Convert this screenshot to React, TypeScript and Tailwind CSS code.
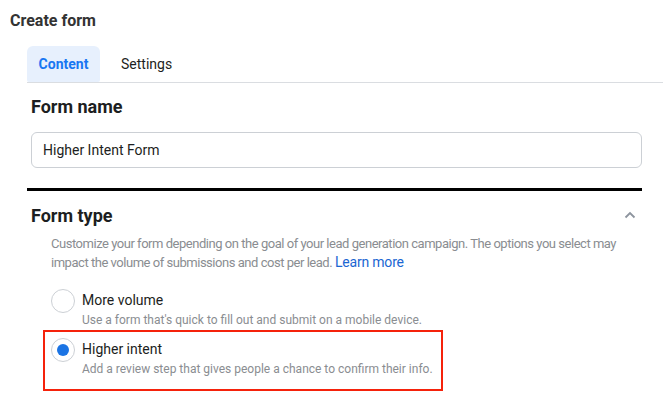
import React from "react";

export default function App() {
  return (
    <div className="w-[663px] h-[402px] bg-white overflow-hidden font-['Roboto',sans-serif] text-[#1c1e21]">
      <div className="pl-[10px] pt-[10px] text-[16px] leading-[22px] font-bold text-[#333]">Create form</div>
      <div className="ml-[27px] mt-[14px] flex items-stretch border-b border-[#dadde1] h-[37px]">
        <div className="w-[73px] h-[36px] rounded-t-[6px] rounded-b-[2px] bg-[#e7f0fd] flex items-center justify-center text-[14px] font-bold text-[#1877f2]">
          Content
        </div>
        <div className="ml-[21px] h-[36px] flex items-center text-[14px] text-[#1c1e21]">Settings</div>
      </div>
      <div className="ml-[31px] mt-[12px] text-[18px] leading-[24px] font-bold text-[#1c1e21]">Form name</div>
      <div className="ml-[31px] mt-[13px] w-[611px] h-[36px] border border-[#ccd0d5] rounded-[6px] flex items-center px-[11px] text-[14px] text-[#1c1e21]">
        Higher Intent Form
      </div>
      <div className="ml-[27px] mt-[20px] w-[615px] h-[3px] bg-black" />
      <div className="ml-[31px] mt-[12px] w-[611px] flex items-center justify-between h-[24px]">
        <div className="text-[18px] font-bold text-[#1c1e21]">Form type</div>
        <svg width="12" height="8" viewBox="0 0 12 8" className="mr-[6px]">
          <path d="M1.5 6.5 L6 2 L10.5 6.5" fill="none" stroke="#8d949e" strokeWidth="1.8" />
        </svg>
      </div>
      <p className="ml-[51px] mt-[7px] w-[575px] text-[13px] leading-[19px] tracking-[-0.47px] text-[#8a8d91]">
        Customize your form depending on the goal of your lead generation campaign. The options you select may impact the volume of submissions and cost per lead.{" "}
        <span className="text-[14px] leading-[18px] tracking-[-0.2px] text-[#1b66d2]">Learn more</span>
      </p>
      <div className="ml-[51px] mt-[17px] flex gap-[7px]">
        <div className="w-[24px] h-[24px] rounded-full border border-[#ccd0d5] bg-white shrink-0" />
        <div className="pt-[2px]">
          <div className="text-[14px] leading-[18px] text-[#1c1e21]">More volume</div>
          <div className="mt-[3px] text-[12px] leading-[16px] text-[#8a8d91]">Use a form that's quick to fill out and submit on a mobile device.</div>
        </div>
      </div>
      <div className="ml-[43px] mt-[2px] w-[400px] h-[61px] border-2 border-[#f5220b] pl-[6px] pt-[6px] flex gap-[7px]">
        <div className="w-[24px] h-[24px] rounded-full border border-[#ccd0d5] bg-white shrink-0 flex items-center justify-center">
          <div className="w-[12px] h-[12px] rounded-full bg-[#1b74e4]" />
        </div>
        <div className="pt-[2px]">
          <div className="text-[14px] leading-[18px] text-[#1c1e21]">Higher intent</div>
          <div className="mt-[3px] text-[12px] leading-[16px] text-[#8a8d91]">Add a review step that gives people a chance to confirm their info.</div>
        </div>
      </div>
    </div>
  );
}
